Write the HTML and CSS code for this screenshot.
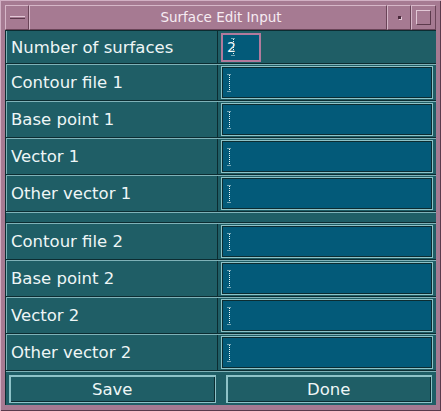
FILE: index.html
```html
<!DOCTYPE html>
<html>
<head>
<meta charset="utf-8">
<link rel="stylesheet" href="styles.css">
</head>
<body>
<div class="window">
  <div class="titlebar">
    <div class="tbtn menu-btn"><span class="bar"></span></div>
    <div class="title">Surface Edit Input</div>
    <div class="tbtn min-btn"><span class="dot"></span></div>
    <div class="tbtn max-btn"><span class="square"></span></div>
  </div>
  <div class="content">
    <div class="row first">
      <div class="label">Number of surfaces</div>
      <div class="field small focused"><span class="val">2</span><svg class="ibeam" width="5" height="18" viewBox="0 0 5 18"><path d="M0.5 0.5h4M0.5 17.5h4" stroke="#e8f4f4" stroke-width="1" stroke-dasharray="1 1"/><path d="M2.5 1v16" stroke="#e8f4f4" stroke-width="1" stroke-dasharray="1 1"/></svg></div>
    </div>
    <div class="row"><div class="label">Contour file 1</div><div class="field"><svg class="ibeam" width="5" height="18" viewBox="0 0 5 18"><path d="M0.5 0.5h4M0.5 17.5h4" stroke="#e8f4f4" stroke-width="1" stroke-dasharray="1 1"/><path d="M2.5 1v16" stroke="#e8f4f4" stroke-width="1" stroke-dasharray="1 1"/></svg></div></div>
    <div class="row"><div class="label">Base point 1</div><div class="field"><svg class="ibeam" width="5" height="18" viewBox="0 0 5 18"><path d="M0.5 0.5h4M0.5 17.5h4" stroke="#e8f4f4" stroke-width="1" stroke-dasharray="1 1"/><path d="M2.5 1v16" stroke="#e8f4f4" stroke-width="1" stroke-dasharray="1 1"/></svg></div></div>
    <div class="row"><div class="label">Vector 1</div><div class="field"><svg class="ibeam" width="5" height="18" viewBox="0 0 5 18"><path d="M0.5 0.5h4M0.5 17.5h4" stroke="#e8f4f4" stroke-width="1" stroke-dasharray="1 1"/><path d="M2.5 1v16" stroke="#e8f4f4" stroke-width="1" stroke-dasharray="1 1"/></svg></div></div>
    <div class="row"><div class="label">Other vector 1</div><div class="field"><svg class="ibeam" width="5" height="18" viewBox="0 0 5 18"><path d="M0.5 0.5h4M0.5 17.5h4" stroke="#e8f4f4" stroke-width="1" stroke-dasharray="1 1"/><path d="M2.5 1v16" stroke="#e8f4f4" stroke-width="1" stroke-dasharray="1 1"/></svg></div></div>
    <div class="sep"></div>
    <div class="row"><div class="label">Contour file 2</div><div class="field"><svg class="ibeam" width="5" height="18" viewBox="0 0 5 18"><path d="M0.5 0.5h4M0.5 17.5h4" stroke="#e8f4f4" stroke-width="1" stroke-dasharray="1 1"/><path d="M2.5 1v16" stroke="#e8f4f4" stroke-width="1" stroke-dasharray="1 1"/></svg></div></div>
    <div class="row"><div class="label">Base point 2</div><div class="field"><svg class="ibeam" width="5" height="18" viewBox="0 0 5 18"><path d="M0.5 0.5h4M0.5 17.5h4" stroke="#e8f4f4" stroke-width="1" stroke-dasharray="1 1"/><path d="M2.5 1v16" stroke="#e8f4f4" stroke-width="1" stroke-dasharray="1 1"/></svg></div></div>
    <div class="row"><div class="label">Vector 2</div><div class="field"><svg class="ibeam" width="5" height="18" viewBox="0 0 5 18"><path d="M0.5 0.5h4M0.5 17.5h4" stroke="#e8f4f4" stroke-width="1" stroke-dasharray="1 1"/><path d="M2.5 1v16" stroke="#e8f4f4" stroke-width="1" stroke-dasharray="1 1"/></svg></div></div>
    <div class="row"><div class="label">Other vector 2</div><div class="field"><svg class="ibeam" width="5" height="18" viewBox="0 0 5 18"><path d="M0.5 0.5h4M0.5 17.5h4" stroke="#e8f4f4" stroke-width="1" stroke-dasharray="1 1"/><path d="M2.5 1v16" stroke="#e8f4f4" stroke-width="1" stroke-dasharray="1 1"/></svg></div></div>
    <div class="buttons">
      <div class="btn">Save</div>
      <div class="btn">Done</div>
    </div>
  </div>
</div>
</body>
</html>
```
FILE: styles.css
```css
* { box-sizing: border-box; }
html, body { margin: 0; padding: 0; background: #a67a92; }
.window {
  width: 441px; height: 411px;
  background: #a67a92;
  padding: 5px 5px 6px 5px;
  box-shadow: inset 1px 1px 0 #d2b0c4, inset -1px -1px 0 #5a3a4c;
  font-family: "DejaVu Sans", sans-serif;
  display: flex; flex-direction: column;
}
.titlebar {
  height: 25px; display: flex;
}
.tbtn {
  width: 24px; height: 25px;
  border-top: 1px solid #d6b6c8; border-left: 1px solid #d6b6c8;
  border-right: 1px solid #6a4458; border-bottom: 1px solid #6a4458;
  display: flex; align-items: center; justify-content: center;
}
.max-btn { width: 25px; }
.menu-btn .bar {
  width: 15px; height: 3px;
  border-top: 1px solid #e2c8d6; border-bottom: 1px solid #5c3a4c;
  background: #a67a92;
}
.min-btn .dot {
  width: 3px; height: 3px; background: #4a2a3c;
  box-shadow: 1px 1px 0 #e2c8d6;
}
.max-btn .square {
  width: 15px; height: 15px;
  border-top: 1px solid #e2c8d6; border-left: 1px solid #e2c8d6;
  border-right: 1px solid #5c3a4c; border-bottom: 1px solid #5c3a4c;
}
.title {
  flex: 1;
  border-top: 1px solid #d6b6c8; border-left: 1px solid #d6b6c8;
  border-right: 1px solid #6a4458; border-bottom: 1px solid #6a4458;
  color: #f6ecf2; font-size: 13.5px; text-align: center; line-height: 23px;
  padding-left: 26px;
}
.content {
  flex: 1;
  background: #1f5e66;
  display: flex; flex-direction: column;
  border-top: 1px solid #0c2c31;
  border-left: 1px solid #0c2c31;
}
.row {
  height: 37px; display: flex; align-items: center;
  border-top: 1px solid #7fb2b8;
  border-bottom: 1px solid #0c2c31;
  padding: 0 4px 0 0;
}
.row.first { height: 33px; border-top: none; }
.label {
  width: 212px; align-self: stretch;
  color: #eef6f6; font-size: 16.5px;
  padding-left: 4px;
  display: flex; align-items: center;
  border-right: 1px solid #0c2c31;
  border-left: 1px solid #7fb2b8;
}
.field {
  margin-left: 4px;
  flex: 1; height: 31px;
  background: #035a79;
  border: 1px solid #0c2c31;
  box-shadow: 0 0 0 1px #8ec3c8;
  display: flex; align-items: center;
  padding-left: 4px;
}
.field.small {
  flex: 0 0 38px; height: 27px;
  box-shadow: 0 0 0 1px #b27a9c;
  border-color: #b27a9c;
  color: #eef6f6; font-size: 14px;
}
.val { margin-right: -5px; }
.ibeam { display: block; }
.sep {
  height: 11px;
  border-top: 1px solid #7fb2b8;
  border-bottom: 1px solid #0c2c31;
}
.buttons {
  flex: 1; display: flex; gap: 10px;
  padding: 3px 4px 2px 3px;
  border-top: 1px solid #7fb2b8;
}
.btn {
  flex: 1;
  border: 1px solid #8ec3c8;
  box-shadow: inset 1px 1px 0 #8ec3c8, inset -1px -1px 0 #0c2c31;
  color: #eef6f6; font-size: 16.5px;
  display: flex; align-items: center; justify-content: center;
}
```
